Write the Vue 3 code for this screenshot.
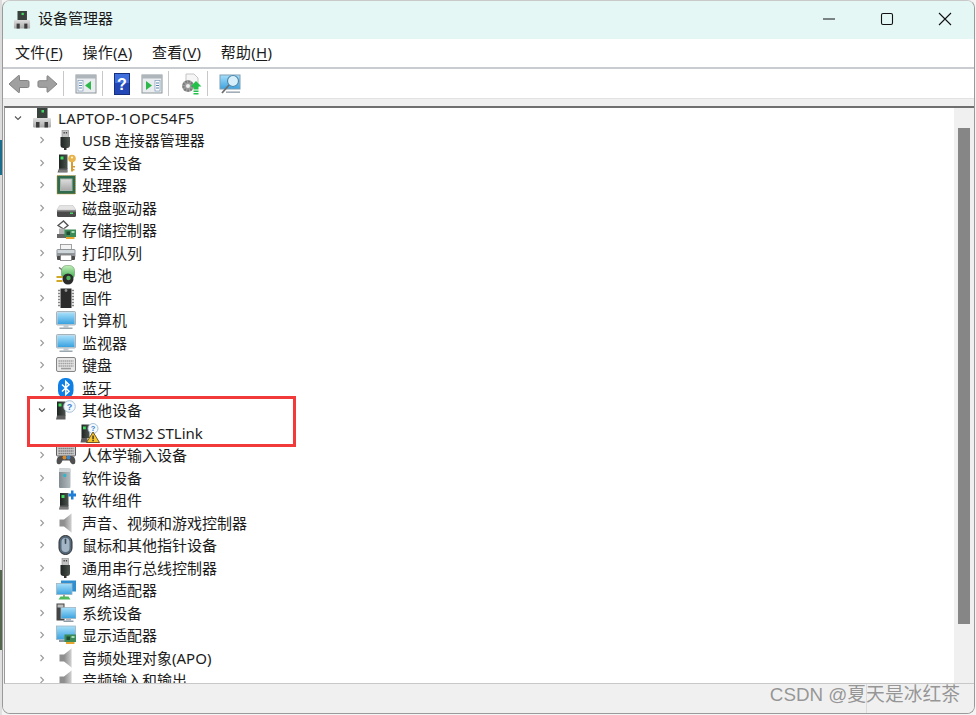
<script setup>
const plug = '<rect x="6" y="0.500" width="6.500" height="7" fill="#c4c4c4" stroke="#8a8a8a" stroke-width=".6"/><rect x="7.500" y="2" width="1.300" height="1.500" fill="#444"/><rect x="9.800" y="2" width="1.300" height="1.500" fill="#444"/><path d="M4.500 7h9.500v8a3 3 0 0 1-3 3H7.500a3 3 0 0 1-3-3z" fill="url(#gDark)"/><rect x="8" y="17.500" width="2.500" height="2.500" fill="#333"/>'
const tower = '<path d="M3 1.500h8.500V16H3z" fill="url(#gDark)"/><rect x="4.500" y="3.500" width="3" height="3" fill="#3fe060"/><path d="M1.500 19.500L3 15.500h8.500v4z" fill="#5d5d5d"/><rect x="3" y="17.500" width="8.500" height="1" fill="#999"/>'
const speaker = '<path d="M8 6.500L15.500 0.500V19.500L8 13.500Z" fill="url(#gSpk)"/><path d="M3.500 6.500H8v7H3.500z" fill="#8e8e8e"/><path d="M15.500 0.500v19" stroke="#e2e2e2" stroke-width=".8"/>'
const monitor = '<rect x="0.500" y="1.500" width="19" height="13.500" rx="1" fill="#cfd8de" stroke="#93a4af" stroke-width=".8"/><rect x="1.500" y="2.500" width="17" height="11.500" fill="url(#gBlue)"/><rect x="7.500" y="15" width="5" height="2.500" fill="#c4cdd3"/><rect x="3.500" y="17.500" width="13" height="1.500" fill="#9aa7af"/>'
const card = '<rect x="8.500" y="9.500" width="11.500" height="7.500" fill="#3c8a58"/><rect x="10.500" y="11.500" width="3.500" height="3.500" fill="#1e4d30"/><rect x="15.500" y="11" width="3" height="2" fill="#a8dcb8"/><path d="M10 17h8.500v2H10z" fill="#e8a62c"/>'
const warning = '<path d="M13 9L19.500 19.500H6.500Z" fill="#f7c52f" stroke="#5e4a18" stroke-width=".9" stroke-linejoin="round"/><rect x="12.400" y="12.500" width="1.300" height="3.800" fill="#222"/><rect x="12.400" y="17" width="1.300" height="1.300" fill="#222"/>'
const bubble = (x, y, r, s) => `<circle cx="${x}" cy="${y}" r="${r}" fill="#f4f9fd" stroke="#9fb9d0" stroke-width=".9"/><text x="${x}" y="${y + s * 0.38}" font-size="${s}" font-family="Liberation Sans" font-weight="700" text-anchor="middle" fill="#3a7fd0">?</text>`

const icons = {
  root: '<rect x="5" y="0" width="10.500" height="11" fill="#39423c"/><rect x="9.500" y="2" width="2.500" height="2.500" fill="#45d866"/><rect x="1" y="10" width="18" height="9.500" rx="1" fill="url(#gGray)"/><rect x="4" y="14" width="3.500" height="5.500" fill="#3c3c3c"/><rect x="12.500" y="14" width="3.500" height="5.500" fill="#3c3c3c"/>',
  usb: plug,
  security: tower + '<circle cx="16" cy="5.500" r="3.800" fill="#e7b44c"/><circle cx="16" cy="4.500" r="1.100" fill="#fff4d6"/><rect x="15" y="9" width="2" height="9.500" fill="#d59c32"/><rect x="17" y="13" width="2" height="1.500" fill="#d59c32"/><rect x="17" y="16" width="1.500" height="1.500" fill="#d59c32"/>',
  cpu: '<rect x="1" y="0.500" width="18.500" height="18.500" fill="#2f6b4c" stroke="#c9a14a" stroke-dasharray="1 1"/><rect x="4.500" y="4" width="11.500" height="11.500" fill="url(#gGray)" stroke="#a7b5ac"/>',
  disk: '<path d="M3.500 7.500h13.500l3 4.500H1z" fill="#e4e4e4" stroke="#bdbdbd" stroke-width=".5"/><rect x="1" y="12" width="19" height="7" rx="1.500" fill="#4a4a4a"/><rect x="1" y="12" width="19" height="1.500" fill="#8c8c8c"/><rect x="14" y="14.500" width="3" height="1.500" fill="#45d866"/>',
  storage: '<path d="M2 5.500L7.500 1l4.500 4.500-4.500 3.500z" fill="#fff" stroke="#555" stroke-width="1.400"/><path d="M1 14h11v4H1z" fill="#666"/><path d="M3 8.500h6v5.500H3z" fill="#b4b4b4"/>' + card,
  printer: '<rect x="4.500" y="1.500" width="11" height="6" fill="#f4f4f4" stroke="#8e8e8e" stroke-width=".8"/><rect x="0.500" y="6" width="19" height="8.500" rx="1.500" fill="#8f9599"/><rect x="1.500" y="7" width="17" height="3" fill="#cfd6da"/><rect x="1" y="13" width="18" height="4" rx="1" fill="#4a4a4a"/><rect x="4.500" y="12" width="11" height="5.500" fill="#fff" stroke="#777" stroke-width=".8"/>',
  battery: '<path d="M3 2.500l4 3" stroke="#777" stroke-width="1.500"/><rect x="5.500" y="0.500" width="13" height="14" rx="5" fill="url(#gGreen)" stroke="#5a8a5a" stroke-width=".5"/><circle cx="12" cy="14" r="5.500" fill="#2b2b2b"/><circle cx="12.500" cy="13" r="2.200" fill="#4cb45a"/><path d="M0.500 12h6M0.500 16h6" stroke="#d0a824" stroke-width="1.900"/>',
  firmware: '<rect x="4.500" y="0.500" width="11" height="19.500" fill="#2b2b2b"/><path d="M4.500 2.500H2M4.500 5.500H2M4.500 8.500H2M4.500 11.500H2M4.500 14.500H2M4.500 17.500H2M15.500 2.500H18M15.500 5.500H18M15.500 8.500H18M15.500 11.500H18M15.500 14.500H18M15.500 17.500H18" stroke="#858585" stroke-width="1.700"/><circle cx="10" cy="2.500" r="1.400" fill="#8f8f8f"/>',
  monitor,
  keyboard: '<rect x="0.500" y="2.500" width="19" height="14" rx="1.500" fill="#e6e6e6" stroke="#858585"/><path d="M2.500 6h15M2.500 8.500h15M2.500 11h15" stroke="#9c9c9c" stroke-width="1.500" stroke-dasharray="1.400 .6"/><rect x="5" y="12.800" width="10" height="1.500" fill="#9c9c9c"/>',
  bluetooth: '<rect x="2" y="0" width="15.500" height="20" rx="7" fill="#0f7fe6"/><path d="M6 6.500L13 13.300L9.800 16.500V3.500L13 6.700L6 13.500" fill="none" stroke="#fff" stroke-width="1.500"/>',
  other: '<path d="M1 1.500h8.500V16H1z" fill="url(#gDark)"/><rect x="2.500" y="3.500" width="3" height="3" fill="#3fe060"/><path d="M0 19.500L1 15.500h8.500v4z" fill="#5d5d5d"/>' + bubble(13.500, 6.500, 5.800, 9),
  stlink: '<path d="M1.500 1.500h8V15h-8z" fill="url(#gDark)"/><rect x="3" y="3.500" width="2.800" height="2.800" fill="#3fe060"/><path d="M0.500 19.500L1.500 15h6v4.500z" fill="#5d5d5d"/>' + bubble(13, 5.500, 5, 7.500) + warning,
  hid: '<rect x="0.500" y="1" width="19" height="10" rx="1" fill="#cfcfcf" stroke="#5e5e5e"/><path d="M2.500 3.500h15M2.500 6h15M2.500 8.500h15" stroke="#6f6f6f" stroke-width="1.300" stroke-dasharray="1.300 .7"/><path d="M1 18.500c-1-3 0-7.500 3.500-7.500h11c3.500 0 4.500 4.500 3.500 7.500-1 1.200-3.500 1-4.500-1l-1-2H6.500l-1 2c-1 2-3.500 2.200-4.500 1z" fill="#4f4f4f"/><circle cx="8.500" cy="12.500" r="2" fill="#d88a2a"/><circle cx="12.500" cy="12.500" r="2" fill="#3b86c8"/>',
  software: '<rect x="3" y="0.500" width="11.500" height="19.500" rx="1" fill="url(#gGray2)"/><rect x="3" y="0.500" width="11.500" height="3.500" fill="#cfd4d7"/><circle cx="8.700" cy="7.500" r="1.700" fill="#2fb6c9"/>',
  component: '<path d="M4 3h8.500v13H4z" fill="url(#gDark)"/><rect x="5.500" y="5" width="3" height="3" fill="#3fe060"/><path d="M3 19.500L4 15.500h8.500v4z" fill="#5d5d5d"/><rect x="4" y="17.500" width="8.500" height="1" fill="#999"/><path d="M12.500 3.500h2.500v-3h2.500v3h2.500v3h-2.500v3H15v-3h-2.500z" fill="#1f7fd6"/>',
  sound: speaker,
  mouse: '<rect x="3" y="0.500" width="13" height="19" rx="6.500" fill="#54697c" stroke="#2e2e2e"/><rect x="5.500" y="3" width="8" height="14" rx="4" fill="#a4b6c5"/><rect x="8.700" y="3.500" width="1.600" height="5.500" rx=".8" fill="#3c4b58"/>',
  network: '<rect x="5" y="0.500" width="15" height="11" fill="#2f8fd0"/><rect x="0.500" y="3.500" width="15.500" height="11" fill="url(#gBlue)" stroke="#9fb4c0" stroke-width=".8"/><path d="M8 14.500v2.500" stroke="#a0a0a0" stroke-width="2"/><path d="M2.500 19.500l2-3h8l2 3z" fill="#4fb95b"/>',
  system: '<rect x="0.500" y="0.500" width="8" height="17" fill="#444"/><rect x="1.500" y="1.500" width="6" height="3" fill="#bdbdbd"/><rect x="5" y="4.500" width="15" height="11" fill="url(#gBlue)" stroke="#9fb4c0" stroke-width=".8"/><rect x="10" y="15.500" width="5" height="2" fill="#aeb6bb"/><rect x="7.500" y="17.500" width="10" height="1.500" fill="#8d9aa3"/>',
  display: '<rect x="0.500" y="1" width="19" height="13.500" fill="url(#gBlue)" stroke="#9fb4c0" stroke-width=".8"/><rect x="3" y="15" width="7" height="2" fill="#8d9aa3"/>' + card,
}

const rows = [
  { level: 0, open: true, icon: 'root', label: 'LAPTOP-1OPC54F5' },
  { level: 1, icon: 'usb', label: 'USB 连接器管理器' },
  { level: 1, icon: 'security', label: '安全设备' },
  { level: 1, icon: 'cpu', label: '处理器' },
  { level: 1, icon: 'disk', label: '磁盘驱动器' },
  { level: 1, icon: 'storage', label: '存储控制器' },
  { level: 1, icon: 'printer', label: '打印队列' },
  { level: 1, icon: 'battery', label: '电池' },
  { level: 1, icon: 'firmware', label: '固件' },
  { level: 1, icon: 'monitor', label: '计算机' },
  { level: 1, icon: 'monitor', label: '监视器' },
  { level: 1, icon: 'keyboard', label: '键盘' },
  { level: 1, icon: 'bluetooth', label: '蓝牙' },
  { level: 1, open: true, icon: 'other', label: '其他设备' },
  { level: 2, leaf: true, icon: 'stlink', label: 'STM32 STLink' },
  { level: 1, icon: 'hid', label: '人体学输入设备' },
  { level: 1, icon: 'software', label: '软件设备' },
  { level: 1, icon: 'component', label: '软件组件' },
  { level: 1, icon: 'sound', label: '声音、视频和游戏控制器' },
  { level: 1, icon: 'mouse', label: '鼠标和其他指针设备' },
  { level: 1, icon: 'usb', label: '通用串行总线控制器' },
  { level: 1, icon: 'network', label: '网络适配器' },
  { level: 1, icon: 'system', label: '系统设备' },
  { level: 1, icon: 'display', label: '显示适配器' },
  { level: 1, icon: 'sound', label: '音频处理对象(APO)' },
  { level: 1, icon: 'sound', label: '音频输入和输出' },
]
const menus = [
  { label: '文件', key: 'F' },
  { label: '操作', key: 'A' },
  { label: '查看', key: 'V' },
  { label: '帮助', key: 'H' },
]
const titleIcon = icons.root
</script>

<template>
  <div class="page">
    <svg class="defs" width="0" height="0">
      <defs>
        <linearGradient id="gBlue" x1="0" y1="0" x2="0" y2="1"><stop offset="0" stop-color="#a8e0fa"/><stop offset="1" stop-color="#3aa2e0"/></linearGradient>
        <linearGradient id="gGray" x1="0" y1="0" x2="0" y2="1"><stop offset="0" stop-color="#dedede"/><stop offset="1" stop-color="#a8a8a8"/></linearGradient>
        <linearGradient id="gGray2" x1="0" y1="0" x2="1" y2="0"><stop offset="0" stop-color="#7f8b90"/><stop offset="1" stop-color="#b4bcc0"/></linearGradient>
        <linearGradient id="gDark" x1="0" y1="0" x2="1" y2="0"><stop offset="0" stop-color="#1f2522"/><stop offset="1" stop-color="#4b534e"/></linearGradient>
        <linearGradient id="gGreen" x1="0" y1="0" x2="0" y2="1"><stop offset="0" stop-color="#c4eebb"/><stop offset="1" stop-color="#30a844"/></linearGradient>
        <linearGradient id="gSpk" x1="0" y1="0" x2="1" y2="0"><stop offset="0" stop-color="#8d8d8d"/><stop offset="1" stop-color="#cfcfcf"/></linearGradient>
      </defs>
    </svg>
    <div class="window">
      <header class="titlebar">
        <svg class="title-icon" viewBox="0 0 20 20" v-html="titleIcon"></svg>
        <span class="title">设备管理器</span>
        <div class="caption">
          <svg width="14" height="14" viewBox="0 0 14 14"><path d="M1 7h12" stroke="#111" stroke-width="1"/></svg>
          <svg width="14" height="14" viewBox="0 0 14 14"><rect x="1.500" y="1.500" width="11" height="11" rx="1.500" fill="none" stroke="#111" stroke-width="1.100"/></svg>
          <svg width="14" height="14" viewBox="0 0 14 14"><path d="M1 1l12 12M13 1L1 13" stroke="#111" stroke-width="1.100"/></svg>
        </div>
      </header>

      <nav class="menubar">
        <span v-for="m in menus" :key="m.key" class="menu">{{ m.label }}(<u>{{ m.key }}</u>)</span>
      </nav>

      <div class="toolbar">
        <svg class="tool back" viewBox="0 0 22 22"><path d="M1 11l9.500-8.500q1-.5 1 .8V7.500h8q1.500 0 1.500 1.500v4q0 1.500-1.500 1.500h-8v4.200q0 1.300-1 .8z" fill="#a0a0a0" stroke="#828282"/></svg>
        <svg class="tool fwd" viewBox="0 0 22 22"><path d="M21 11l-9.500-8.500q-1-.5-1 .8V7.500h-8Q1 7.500 1 9v4q0 1.500 1.500 1.500h8v4.200q0 1.300 1 .8z" fill="#a0a0a0" stroke="#828282"/></svg>
        <i class="sep"></i>
        <svg class="tool" viewBox="0 0 22 22"><rect x="1" y="2" width="20" height="18" fill="#e9edf0" stroke="#8d969c"/><rect x="1" y="2" width="20" height="3.500" fill="#aeb6bc"/><rect x="3" y="7.500" width="5" height="10.500" fill="#fff" stroke="#7d9ab8" stroke-width=".7"/><path d="M4 10h3M4 12.500h3M4 15h3" stroke="#5c84ad" stroke-width="1"/><path d="M16 8v9l-6-4.500z" fill="#2eb84c"/></svg>
        <i class="sep"></i>
        <svg class="tool tall" viewBox="0 0 16 22"><rect x="0.500" y="0.500" width="15" height="21" fill="#2347b6" stroke="#14307f"/><rect x="1" y="1" width="14" height="9" fill="#3f6fdc"/><text x="8" y="17" font-size="16" font-weight="700" font-family="Liberation Sans" text-anchor="middle" fill="#fff">?</text></svg>
        <svg class="tool" viewBox="0 0 22 22"><rect x="1" y="2" width="20" height="18" fill="#e9edf0" stroke="#8d969c"/><rect x="1" y="2" width="20" height="3.500" fill="#aeb6bc"/><rect x="14" y="7.500" width="5" height="10.500" fill="#fff" stroke="#7d9ab8" stroke-width=".7"/><path d="M15 10h3M15 12.500h3M15 15h3" stroke="#5c84ad" stroke-width="1"/><path d="M5 8v9l6-4.500z" fill="#2eb84c"/></svg>
        <i class="sep"></i>
        <svg class="tool" viewBox="0 0 22 22"><path d="M6 1h8l4 4v9H6z" fill="#f6f6f6" stroke="#c4c4c4"/><circle cx="8" cy="13" r="6" fill="#9c9c9c"/><circle cx="8" cy="13" r="4.500" fill="none" stroke="#777" stroke-width="2" stroke-dasharray="1.500 1.500"/><circle cx="8" cy="13" r="2" fill="#eee"/><path d="M16 8l5.500 5.500h-3v3h-5v-3h-3z" fill="#22c24a"/><rect x="13.500" y="17.500" width="5" height="1.500" fill="#22c24a"/><rect x="13.500" y="20" width="5" height="1.500" fill="#22c24a"/></svg>
        <i class="sep"></i>
        <svg class="tool" viewBox="0 0 22 22"><rect x="1" y="2" width="20" height="14" fill="url(#gBlue)" stroke="#7fa0b5"/><circle cx="14" cy="8" r="5.500" fill="#d7effb" stroke="#4f88ad" stroke-width="1.200"/><path d="M10 12l-7 8" stroke="#6e6e6e" stroke-width="1.800"/><rect x="7" y="18.500" width="14" height="1.300" fill="#8d9aa3"/></svg>
      </div>

      <div class="strip"></div>

      <div class="content">
        <div class="tree">
          <div v-for="r in rows" :key="r.label" class="row" :class="'lv' + r.level">
            <svg v-if="!r.leaf" class="chev" viewBox="0 0 8 8">
              <path v-if="r.open" d="M1 2.500l3 3 3-3" fill="none" stroke="#555" stroke-width="1.100"/>
              <path v-else d="M2.500 1l3 3-3 3" fill="none" stroke="#9a9a9a" stroke-width="1.100"/>
            </svg>
            <svg class="ico" viewBox="0 0 20 20" v-html="icons[r.icon]"></svg>
            <span class="label">{{ r.label }}</span>
          </div>
        </div>
        <div class="scroll"><div class="thumb"></div></div>
      </div>

      <footer class="status"><i class="status-cell"></i></footer>
    </div>
    <div class="redbox"></div>
    <div class="watermark">CSDN @夏天是冰红茶</div>
  </div>
</template>

<style>
html, body { margin: 0; background: #fff; overflow: hidden; }
</style>

<style scoped>
.page {
  position: relative;
  width: 976px;
  height: 715px;
  overflow: hidden;
  background: linear-gradient(#dcdcdc 0 140px, #1c6c8c 140px 175px, #dcdcdc 175px 570px, #55664e 570px 650px, #e0e0e0 650px) left top / 2px 100% no-repeat #f4f4f4;
  font-family: "Noto Sans", "Noto Sans CJK SC", sans-serif;
  color: #1b1b1b;
}
.defs { position: absolute; }
.window {
  margin-left: 2px;
  width: 973px;
  height: 714px;
  box-sizing: border-box;
  border: 1px solid #9a9a9a;
  border-top-color: #c9c9c9;
  border-radius: 8px;
  background: #f0f0f0;
  display: flex;
  flex-direction: column;
  overflow: hidden;
}
.titlebar {
  height: 38px;
  flex: none;
  background: #e4f7f5;
  display: flex;
  align-items: center;
  padding-left: 10px;
}
.title-icon { width: 18px; height: 20px; margin-right: 7px; }
.title { font-size: 15px; line-height: 20px; margin-bottom: 4px; }
.caption {
  margin-left: auto;
  display: flex;
  gap: 44px;
  padding-right: 22px;
  margin-bottom: 2px;
}
.menubar {
  height: 28px;
  flex: none;
  background: #fff;
  display: flex;
  align-items: center;
  gap: 19.500px;
  padding-left: 12px;
  font-size: 15px;
  letter-spacing: 0.25px;
  border-bottom: 2px solid #c9cdd2;
  box-sizing: content-box;
}
.menu { line-height: 20px; margin-bottom: 2px; }
.menu u { text-underline-offset: 2px; }
.toolbar {
  height: 29px;
  flex: none;
  background: #fff;
  display: flex;
  align-items: center;
  padding-left: 5px;
}
.tool { width: 22px; height: 22px; flex: none; }
.tool.back { margin-right: 7px; }
.tool.fwd { width: 21px; }
.tool.tall { width: 16px; margin-right: 11px; }
.sep { width: 1px; height: 25px; background: #c8c8c8; margin: 0 11px 0 5px; flex: none; }
.strip {
  height: 7px;
  flex: none;
  background: #f0f0f0;
  border-top: 1px solid #e2e2e2;
}
.content {
  flex: 1;
  min-height: 0;
  display: flex;
  margin: 0 0 0 1px;
  border-top: 2px solid #6f6f6f;
  border-left: 1px solid #9a9a9a;
  border-bottom: 1px solid #c8c8c8;
  background: #fff;
  overflow: hidden;
}
.tree {
  flex: 1;
  min-width: 0;
  overflow: hidden;
  margin-top: -1.500px;
}
.row {
  height: 22.5px;
  display: flex;
  align-items: center;
  font-size: 15px;
  white-space: nowrap;
}
.label { line-height: 20px; }
.lv0 .label { letter-spacing: 0.27px; }
.chev { width: 8px; height: 8px; flex: none; margin-right: 10px; }
.ico { width: 20px; height: 20px; flex: none; margin-right: 6px; }
.lv0 { padding-left: 9px; }
.lv1 { padding-left: 33px; }
.lv2 { padding-left: 75px; }
.scroll {
  width: 20px;
  flex: none;
  background: #f0f0f0;
}
.thumb {
  margin: 20px 4px 0 4px;
  height: 496px;
  background: #868686;
}
.status {
  height: 29px;
  flex: none;
  background: #f0f0f0;
  display: flex;
}
.status-cell {
  margin-left: 863px;
  width: 1px;
  background: #dcdcdc;
  align-self: stretch;
}
.redbox {
  position: absolute;
  left: 27px;
  top: 396px;
  width: 269px;
  height: 51px;
  box-sizing: border-box;
  border: 3px solid #f23a3a;
}
.watermark {
  position: absolute;
  right: 16px;
  top: 683px;
  font-family: "Liberation Sans", "Noto Sans CJK SC", sans-serif;
  font-size: 18.800px;
  line-height: 24px;
  color: rgba(110, 110, 110, 0.7);
  white-space: nowrap;
}
</style>
